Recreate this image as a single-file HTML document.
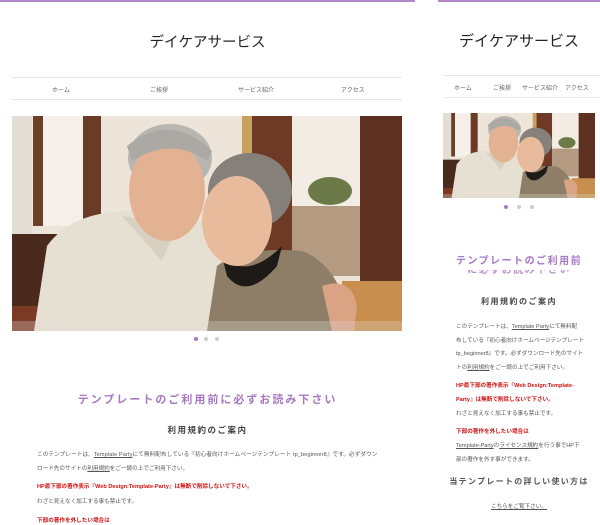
<!DOCTYPE html>
<html><head><meta charset="utf-8"><style>
*{margin:0;padding:0;box-sizing:border-box}
body{width:600px;height:525px;background:#fff;position:relative;overflow:hidden;font-family:"Liberation Sans","Noto Sans CJK JP",sans-serif;color:#333}
.a{position:absolute;white-space:nowrap}
.c{text-align:center}
.bar{position:absolute;top:0;height:2px;background:#b488c9}
.ln{position:absolute;height:1px;background:#e6e6e6}
.nav{font-size:6px;color:#666}
.pur{color:#a978c4;font-weight:bold;letter-spacing:2px}
.h2{font-weight:bold;color:#444;letter-spacing:1.5px}
.p{font-size:5.6px;color:#555}
.r{font-size:5.6px;color:#d01010;font-weight:bold}
u{text-decoration:underline}
.dot{position:absolute;width:4px;height:4px;border-radius:50%;background:#ccc}
</style></head><body>
<svg width="0" height="0" style="position:absolute">
<defs>
<symbol id="ph" viewBox="0 0 390 215" preserveAspectRatio="none">
<rect width="390" height="215" fill="#eee5da"/>
<rect x="0" y="0" width="20" height="120" fill="#e2ddd5"/>
<rect x="21" y="0" width="10" height="110" fill="#6b3f2a"/>
<rect x="31" y="0" width="40" height="110" fill="#f4efe8"/>
<rect x="71" y="0" width="18" height="110" fill="#6a3c28"/>
<rect x="0" y="118" width="55" height="97" fill="#4a2a1c"/>
<rect x="0" y="190" width="55" height="25" fill="#7a3a24"/>
<rect x="230" y="0" width="10" height="130" fill="#c8a060"/>
<rect x="240" y="0" width="40" height="150" fill="#6e3a26"/>
<rect x="280" y="0" width="68" height="90" fill="#f2ece4"/>
<ellipse cx="318" cy="75" rx="22" ry="14" fill="#6c7a48"/>
<rect x="280" y="90" width="68" height="70" fill="#b39a80"/>
<rect x="348" y="0" width="42" height="215" fill="#5e3020"/>
<rect x="330" y="165" width="60" height="50" fill="#c88e4e"/>
<path d="M22 215 L35 130 Q60 95 120 95 L205 105 L215 215 Z" fill="#e6e0d3"/>
<path d="M110 100 L150 145 L165 110 Z" fill="#d8d0c0"/>
<ellipse cx="158" cy="42" rx="42" ry="34" fill="#b8b6b0"/>
<ellipse cx="155" cy="75" rx="38" ry="50" fill="#e3b293"/>
<path d="M115 30 Q158 -5 200 35 L195 45 Q160 20 120 45 Z" fill="#aaa9a3"/>
<path d="M195 215 L205 150 Q230 130 290 135 Q330 150 340 215 Z" fill="#8e7e68"/>
<path d="M210 140 Q235 165 270 130 L265 150 Q235 185 215 160 Z" fill="#1e1a18"/>
<ellipse cx="238" cy="75" rx="42" ry="38" fill="#858079"/>
<ellipse cx="225" cy="105" rx="35" ry="45" fill="#e8bb9c"/>
<path d="M310 170 Q340 160 345 190 L342 215 L320 215 Z" fill="#d9a384"/>
<rect x="0" y="205" width="390" height="10" fill="#e0dbd3" opacity=".3"/>
</symbol>
</defs></svg>

<!-- LEFT (desktop) -->
<div class="bar" style="left:0;width:415px"></div>
<div class="a c" style="left:0;width:415px;top:31px;font-size:14.5px;color:#222">デイケアサービス</div>
<div class="ln" style="left:12px;width:390px;top:77px"></div>
<div class="ln" style="left:12px;width:390px;top:99px"></div>
<div class="a nav" style="left:52px;top:85px">ホーム</div>
<div class="a nav" style="left:150px;top:85px">ご挨拶</div>
<div class="a nav" style="left:238px;top:85px">サービス紹介</div>
<div class="a nav" style="left:341px;top:85px">アクセス</div>
<svg class="a" style="left:12px;top:116px" width="390" height="215"><use href="#ph"/></svg>
<div class="dot" style="left:194px;top:337px;background:#a978c4"></div>
<div class="dot" style="left:204px;top:337px"></div>
<div class="dot" style="left:215px;top:337px"></div>
<div class="a c pur" style="left:0;width:415px;top:391px;font-size:11px">テンプレートのご利用前に必ずお読み下さい</div>
<div class="a c h2" style="left:0;width:415px;top:424px;font-size:8.5px">利用規約のご案内</div>
<div class="a p" style="left:37px;top:450px;letter-spacing:.1px">このテンプレートは、<u>Template Party</u>にて無料配布している『初心者向けホームページテンプレート tp_beginner8』です。必ずダウン</div>
<div class="a p" style="left:37px;top:464px">ロード先のサイトの<u>利用規約</u>をご一読の上でご利用下さい。</div>
<div class="a r" style="left:37px;top:482px">HP最下部の著作表示『Web Design:Template-Party』は無断で削除しないで下さい。</div>
<div class="a p" style="left:37px;top:497px">わざと見えなく加工する事も禁止です。</div>
<div class="a r" style="left:37px;top:516px">下部の著作を外したい場合は</div>

<!-- RIGHT (mobile) -->
<div class="bar" style="left:438px;width:162px"></div>
<div class="a c" style="left:438px;width:162px;top:30px;font-size:15px;color:#222">デイケアサービス</div>
<div class="ln" style="left:444px;width:156px;top:75px"></div>
<div class="ln" style="left:444px;width:156px;top:97px"></div>
<div class="a nav" style="left:454px;top:83px">ホーム</div>
<div class="a nav" style="left:493px;top:83px">ご挨拶</div>
<div class="a nav" style="left:522px;top:83px">サービス紹介</div>
<div class="a nav" style="left:565px;top:83px">アクセス</div>
<svg class="a" style="left:443px;top:113px" width="152" height="85"><use href="#ph"/></svg>
<div class="dot" style="left:504px;top:205px;background:#a978c4"></div>
<div class="dot" style="left:517px;top:205px"></div>
<div class="dot" style="left:530px;top:205px"></div>
<div class="a c pur" style="left:438px;width:162px;top:252px;font-size:10px;letter-spacing:1.5px">テンプレートのご利用前</div>
<div class="a" style="left:438px;width:162px;top:270px;height:6px;overflow:hidden"><div class="c pur" style="margin-top:-6px;font-size:10px;line-height:14px;letter-spacing:1.5px;opacity:.8">に必ずお読み下さい</div></div>
<div class="a c h2" style="left:438px;width:162px;top:296px;font-size:8px">利用規約のご案内</div>
<div class="a p" style="left:456px;top:322px">このテンプレートは、<u>Template Party</u>にて無料配</div>
<div class="a p" style="left:456px;top:336px">布している『初心者向けホームページテンプレート</div>
<div class="a p" style="left:456px;top:349px">tp_beginner8』です。必ずダウンロード先のサイト</div>
<div class="a p" style="left:456px;top:363px">トの<u>利用規約</u>をご一読の上でご利用下さい。</div>
<div class="a r" style="left:456px;top:381px">HP最下部の著作表示『Web Design:Template-</div>
<div class="a r" style="left:456px;top:395px">Party』は無断で削除しないで下さい。</div>
<div class="a p" style="left:456px;top:409px">わざと見えなく加工する事も禁止です。</div>
<div class="a r" style="left:456px;top:427px">下部の著作を外したい場合は</div>
<div class="a p" style="left:456px;top:441px"><u>Template-Party</u>の<u>ライセンス規約</u>を行う事でHP下</div>
<div class="a p" style="left:456px;top:455px">部の著作を外す事ができます。</div>
<div class="a c h2" style="left:438px;width:162px;top:476px;font-size:8px;color:#555;letter-spacing:1.3px">当テンプレートの詳しい使い方は</div>
<div class="a c p" style="left:438px;width:162px;top:502px"><u>こちらをご覧下さい。</u></div>
</body></html>
